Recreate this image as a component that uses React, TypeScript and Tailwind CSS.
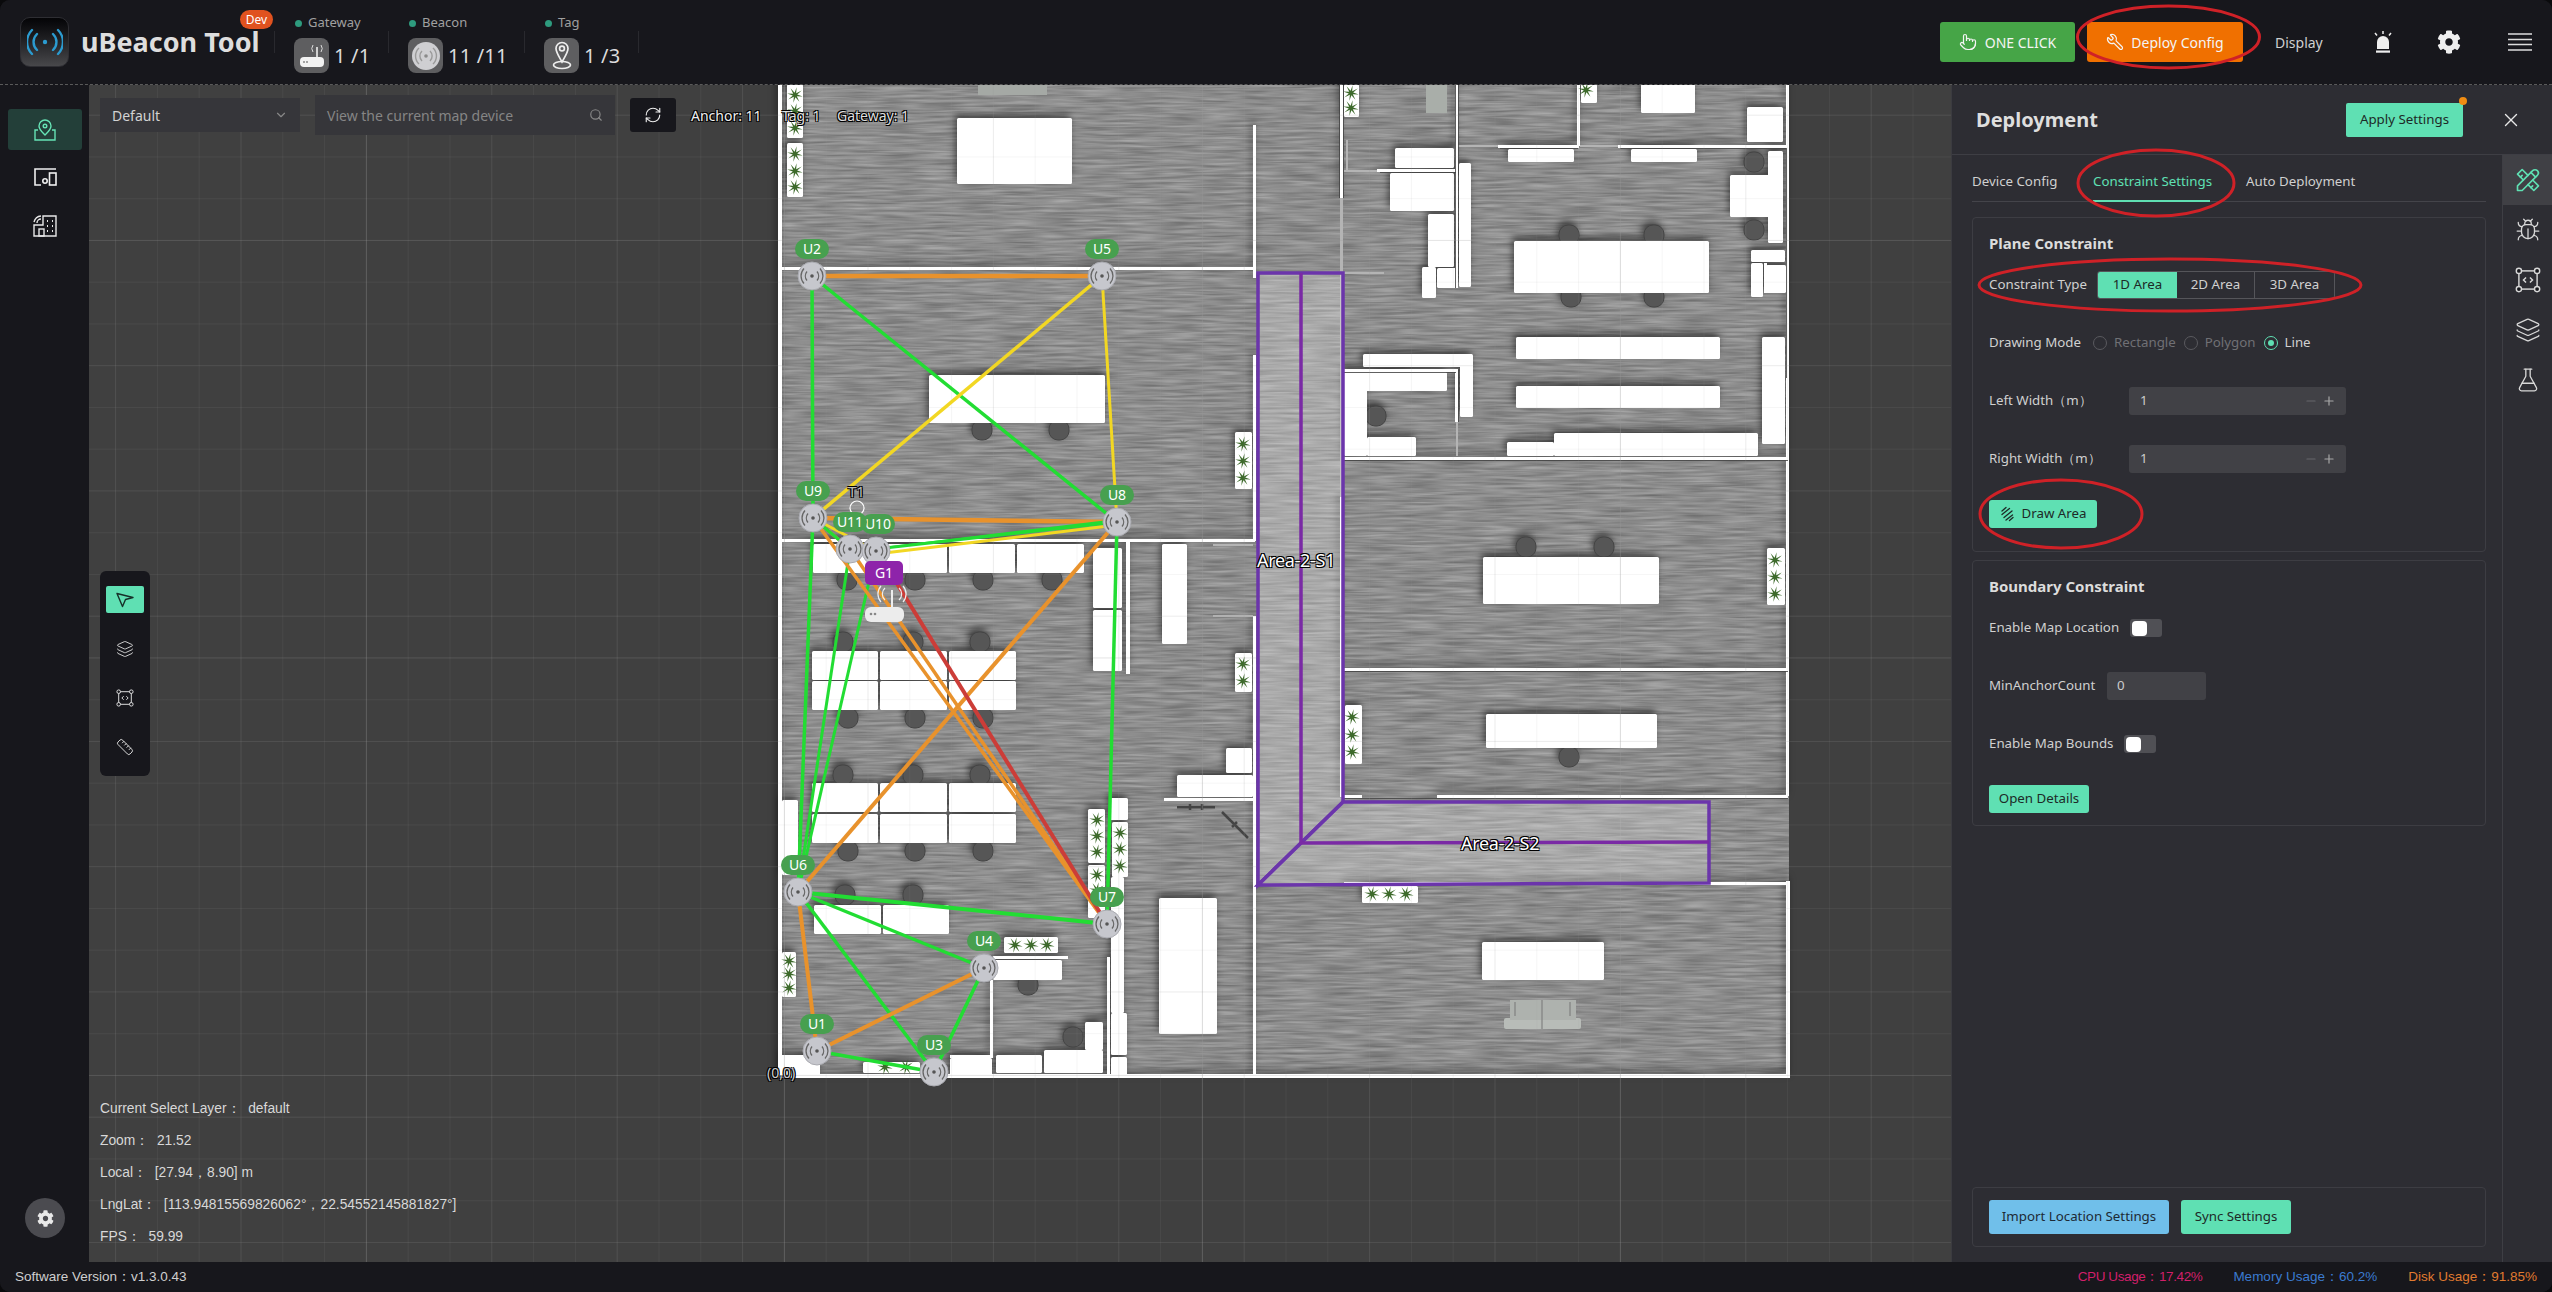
import React from "react";
import { ChevronDown, FlaskConical, Layers, Minus, Plus, Pointer, RefreshCw, Ruler, Search, Bug, Wrench, X } from "lucide-react";
import { FaCog } from "react-icons/fa";
import { TbTools } from "react-icons/tb";

type R = [number, number, number, number];
const tables: R[] = [
  [957,118,1072,184],[787,84,803,138],[787,143,803,197],[929,375,1105,423],[1235,432,1252,489],
  [813,544,880,573],[881,544,947,573],[949,544,1015,573],[1017,544,1084,573],[1093,548,1122,608],[1093,610,1122,671],
  [1162,544,1187,644],[1235,653,1252,692],[812,651,878,680],[880,651,947,680],[949,651,1016,680],[812,681,878,710],[880,681,947,710],[949,681,1016,710],
  [812,783,878,812],[880,783,947,812],[949,783,1016,812],[812,814,878,843],[880,814,947,843],[949,814,1016,843],
  [1226,748,1252,773],[1177,775,1253,797],[1109,798,1128,820],[1112,822,1128,877],[1088,809,1105,863],[1088,865,1105,918],[782,800,798,875],
  [814,905,881,934],[883,905,949,934],[782,952,796,997],[1004,937,1058,953],[993,960,1062,980],[781,1057,820,1075],[863,1062,920,1073],[950,1058,992,1075],
  [996,1055,1042,1073],[1044,1050,1103,1073],[1085,1022,1103,1050],[1111,877,1124,1013],[1111,1013,1127,1055],[1111,1057,1127,1075],[1159,898,1217,1034],
  [1395,148,1454,168],[1390,173,1454,211],[1428,214,1454,267],[1422,267,1436,298],[1437,268,1458,288],[1459,163,1471,287],[1344,84,1359,117],
  [1508,149,1574,162],[1631,149,1697,162],[1581,84,1597,103],[1641,84,1695,113],[1747,107,1783,142],[1768,151,1783,243],[1730,175,1783,217],
  [1514,241,1709,293],[1516,337,1720,359],[1516,386,1720,408],[1554,433,1758,456],[1507,442,1554,456],[1762,337,1785,444],[1751,250,1785,262],[1751,263,1763,297],[1766,265,1786,293],
  [1363,354,1472,367],[1460,354,1473,417],[1344,372,1447,391],[1344,372,1367,456],[1367,437,1416,456],
  [1483,557,1659,604],[1767,548,1785,605],[1486,714,1657,748],[1345,705,1362,764],[1362,886,1418,903],[1482,942,1604,980],
];
const walls: R[] = [
  [778,84,782,1078],[781,267,1253,270],[781,539,1255,542],[1253,125,1256,278],[1253,355,1256,541],[1253,616,1256,1078],[1126,541,1130,674],
  [1164,798,1253,801],[1107,957,1110,1078],[1340,84,1343,198],[1340,497,1343,797],[1455,84,1458,288],[1377,169,1456,172],[1498,145,1579,148],[1577,84,1580,146],[1618,145,1786,148],
  [1344,369,1458,372],[1455,370,1458,422],[1344,457,1788,460],[1786,84,1789,796],[1344,668,1788,671],[1344,795,1362,798],[1437,795,1788,798],[1344,882,1790,885],[1786,881,1790,1078],[778,1074,1790,1078],
  [1764,263,1767,293],[993,956,1068,959],[990,980,993,1058],[781,1055,820,1058],[950,1055,992,1058],
];
const glass: R[] = [[1340,198,1343,497],[1458,145,1498,147],[1580,145,1618,147],[1344,170,1377,172],[1456,422,1458,456],[1344,272,1384,274],[1213,544,1253,546],[1213,615,1253,617],[1346,140,1348,170]];
const chairs: [number,number][] = [[982,430],[1059,430],[847,580],[915,580],[983,580],[1052,580],[843,642],[913,642],[980,642],[848,718],[915,718],[983,718],[843,775],[913,775],[980,775],[848,851],[915,851],[983,851],[845,895],[913,895],[1028,985],[1073,1037],[1754,162],[1754,230],[1569,235],[1654,235],[1571,297],[1654,297],[1376,416],[1526,547],[1604,547],[1569,757]];
const plants: [number,number][] = [[795,95],[795,111],[795,128],[795,154],[795,171],[795,187],[1243,444],[1243,461],[1243,478],[1243,664],[1243,681],[1097,820],[1097,836],[1097,852],[1097,875],[1097,890],[1120,833],[1120,849],[1120,866],[789,961],[789,974],[789,988],[1015,945],[1031,945],[1047,945],[885,1067],[906,1067],[1351,93],[1351,108],[1586,90],[1775,560],[1775,577],[1775,594],[1352,717],[1352,735],[1352,752],[1372,894],[1389,894],[1406,894]];

const A: Record<string,[number,number]> = {U2:[812,276],U5:[1102,276],U9:[813,518],U8:[1117,522],U11:[850,549],U10:[876,551],U6:[798,892],U7:[1107,924],U4:[984,968],U1:[817,1051],U3:[934,1072]};
const OR="#e8922c",GR="#22dd33",YE="#f2d723",RD="#cc3d38";
const links: [string,string,string,number][] = [
  ["U2","U5",OR,4.5],["U9","U8",OR,4.5],["U2","U9",GR,3.5],["U2","U8",GR,3.5],["U5","U9",YE,3.5],["U5","U8",YE,3],
  ["U9","U6",GR,3.5],["U11","U6",GR,3],["U10","U6",GR,3],["U8","U7",GR,3.5],["U8","U6",OR,4],["U9","U7",OR,3.5],["U11","U7",OR,3.5],
  ["U6","U7",GR,4],["U6","U4",GR,3.5],["U6","U3",GR,3.5],["U6","U1",OR,4],["U4","U1",OR,4],["U4","U3",GR,3.5],["U1","U3",GR,3.5],
  ["U9","U11",OR,3],["U9","U10",YE,3],["U9","U11",GR,3],
];
const labels: [string,number,number][] = [["U2",812,249],["U5",1102,249],["U9",813,491],["U8",1117,495],["U10",878,524],["U11",850,522],["U6",798,865],["U7",1107,897],["U4",984,941],["U1",817,1024],["U3",934,1045]];

function range(s:number,e:number,st:number){const o:number[]=[];for(let v=s;v<=e;v+=st)o.push(v);return o;}
const star=(()=>{const p:string[]=[];for(let i=0;i<16;i++){const r=i%2?2.2:8;const a=i*Math.PI/8+0.2;p.push(`${(r*Math.cos(a)).toFixed(1)},${(r*Math.sin(a)).toFixed(1)}`);}return p.join(" ");})();
const lineOp=(i:number,majorOffset:number,major:number)=>(i+majorOffset)%10===0?major:i%3===0?0.19:0.1;

function FloorMap(){
  return (
    <svg className="absolute inset-0 w-full h-full" viewBox="89 85 1862 1177">
      <defs>
        <filter id="weave" x="0" y="0" width="100%" height="100%" colorInterpolationFilters="sRGB">
          <feTurbulence type="fractalNoise" baseFrequency="0.025 0.4" numOctaves={2} seed={4}/>
          <feColorMatrix type="matrix" values="0.3 0 0 0 0.4  0.3 0 0 0 0.4  0.3 0 0 0 0.4  0 0 0 0 1"/>
        </filter>
        <filter id="cast" x="-5%" y="-5%" width="110%" height="110%" colorInterpolationFilters="sRGB">
          <feDropShadow dx={-2} dy={-4} stdDeviation={3.5} floodColor="#000" floodOpacity={0.5}/>
        </filter>
      </defs>
      <rect x={781} y={85} width={1008} height={991} fill="#8a8a8a" filter="url(#weave)"/>
      <g filter="url(#cast)">
        {chairs.map(([x,y],i)=><rect key={i} x={x-10} y={y-10} width={20} height={20} rx={9} fill="#565656" stroke="#444"/>)}
        {walls.map(([a,b,c,d],i)=><rect key={i} x={a} y={b} width={c-a} height={d-b} fill="#fff"/>)}
        {tables.map(([a,b,c,d],i)=><rect key={i} x={a} y={b} width={c-a} height={d-b} rx={1.5} fill="#fff"/>)}
      </g>
      {glass.map(([a,b,c,d],i)=><rect key={i} x={a} y={b} width={c-a} height={d-b} fill="#b4b4b4"/>)}
      {[[1455,84,1,204],[1458,84,1,86],[1344,372,112,1],[1344,460,444,1],[1344,671,444,1],[1344,798,444,1],[1339,84,1,114],[1343,84,1,114],[1380,172,76,1],[1500,148,78,1],[1620,148,166,1],[1458,370,1,52],[1786,148,1,230]].map(([x,y,w,h],i)=><rect key={i} x={x} y={y} width={w} height={h} fill="#444" opacity={0.85}/>)}
      <rect x={1426} y={84} width={21} height={29} fill="#a9aea9"/>
      <rect x={978} y={84} width={69} height={11} fill="#a5a9a5"/>
      <rect x={1504} y={1018} width={77} height={11} rx={2} fill="#b8bcb8"/>
      <rect x={1510} y={1000} width={66} height={20} fill="#aeb2ae"/><path d="M1515 1002v14M1570 1002v14M1542 1000v29" stroke="#777" strokeWidth={1}/>
      <rect x={1177} y={806} width={38} height={2.5} fill="#444"/><path d="M1222 812L1248 838M1190 804v6M1202 804v6M1232 827l5-5" stroke="#444" strokeWidth={2.5}/>
      {plants.map(([x,y],i)=><polygon key={i} transform={`translate(${x} ${y})`} points={star} fill="#3d6a2b"/>)}
      <g fill="none">
        {range(115.2,1262,41.75).map((y,i)=><line key={i} x1={89} x2={1951} y1={y} y2={y} stroke="#999" strokeOpacity={lineOp(i,7,0.26)}/>)}
        {range(115.6,1951,41.8).map((x,i)=><line key={i} x1={x} x2={x} y1={85} y2={1262} stroke="#999" strokeOpacity={lineOp(i,4,0.36)}/>)}
      </g>
      <path d="M1258 273H1343V802L1258 885Z" fill="#fff" fillOpacity={0.25} stroke="#6b35ab" strokeWidth={3.5}/>
      <path d="M1343 802H1709V883L1258 885Z" fill="#fff" fillOpacity={0.25} stroke="#6b35ab" strokeWidth={3.5}/>
      <path d="M1301 273V843L1709 842" fill="none" stroke="#7a2aa5" strokeWidth={3.5}/>
      {links.map(([a,b,c,w],i)=><line key={i} x1={A[a][0]} y1={A[a][1]} x2={A[b][0]} y2={A[b][1]} stroke={c} strokeWidth={w}/>)}
      <line x1={876} y1={549} x2={1117} y2={522} stroke={GR} strokeWidth={3}/>
      <line x1={876} y1={554} x2={1117} y2={525} stroke={YE} strokeWidth={3}/>
      <line x1={850} y1={552} x2={1117} y2={520} stroke={GR} strokeWidth={2}/>
      <line x1={880} y1={556} x2={1107} y2={924} stroke={RD} strokeWidth={4}/>
      <circle cx={857} cy={508} r={7} fill="none" stroke="#fff" strokeWidth={1.2}/>
      {Object.entries(A).map(([k,[x,y]])=>(
        <g key={k} transform={`translate(${x} ${y})`}>
          <circle r={14} fill="#c6c7cd" stroke="#a9aab0"/>
          <circle r={1.8} fill="#555"/>
          <path d="M-5 -4.5A7 7 0 0 0 -5 4.5M5 -4.5A7 7 0 0 1 5 4.5M-8 -7.5A11 11 0 0 0 -8 7.5M8 -7.5A11 11 0 0 1 8 7.5" fill="none" stroke="#666" strokeWidth={1.3}/>
        </g>
      ))}
      <g>
        <path d="M892 590V608" stroke="#eee" strokeWidth={2}/>
        <path d="M885 588A8 8 0 0 0 885 600M899 588A8 8 0 0 1 899 600M881 586A12 12 0 0 0 881 602M903 586A12 12 0 0 1 903 602" fill="none" stroke="#eee" strokeWidth={1.2}/>
        <rect x={865} y={607} width={39} height={15} rx={6} fill="#ececec"/>
        <circle cx={871} cy={614} r={1.3} fill="#888"/><circle cx={875} cy={614} r={1.3} fill="#888"/>
      </g>
    </svg>
  );
}

const outline="[text-shadow:-1px_-1px_0_#000,1px_-1px_0_#000,-1px_1px_0_#000,1px_1px_0_#000]";

function MapOverlays(){
  return <>
    {labels.map(([t,x,y])=><div key={t} style={{left:x-89-17,top:y-85-10}} className="absolute w-[34px] h-[20px] rounded-full bg-[#47a04f] text-white text-[14px] leading-[20px] text-center">{t}</div>)}
    <div className="absolute left-[776px] top-[476px] w-[38px] h-[24px] rounded-[5px] bg-[#8e24aa] text-white text-[14px] leading-[24px] text-center">G1</div>
    <div className={`absolute left-[759px] top-[396px] text-[15px] leading-[20px] text-[#bbb] ${outline}`}>T1</div>
    <div className={`absolute left-[678px] top-[978px] text-[14px] leading-[20px] text-[#ccc] ${outline}`}>(0,0)</div>
    <div className={`absolute left-[1168px] top-[463px] text-[18px] leading-[24px] tracking-[-0.3px] text-white ${outline}`}>Area-2-S1</div>
    <div className={`absolute left-[1372px] top-[746px] text-[18px] leading-[24px] tracking-[-0.3px] text-white ${outline}`}>Area-2-S2</div>
  </>;
}

function Stat({label,value,icon,w}:{label:string;value:string;icon:React.ReactNode;w:string}){
  return (
    <div className={`${w} self-start mt-[14px] pl-[19px]`}>
      <div className="flex items-center gap-[6px] h-[18px] pl-[1px]">
        <span className="w-[7px] h-[7px] rounded-full bg-[#2e9b7e]"/>
        <span className="text-[13px] text-[#a0a0a0]">{label}</span>
      </div>
      <div className="flex items-center mt-[6px] gap-[5px]">
        <div className="w-[35px] h-[35px] rounded-[8px] bg-[#5e5e60] flex items-center justify-center">{icon}</div>
        <span className="text-[20px] text-[#dcdcdc] tracking-[0.2px]">{value}</span>
      </div>
    </div>
  );
}

function Header(){
  return (
    <header className="h-[85px] shrink-0 flex items-center bg-[#17171c] border-b border-dashed border-[#5a5a5a] pl-[20px] pr-[20px]">
      <div className="w-[49px] h-[50px] rounded-[10px] border border-[#2e2e33] bg-gradient-to-b from-[#050507] to-[#48484b] flex items-center justify-center">
        <svg width="36" height="28" viewBox="0 0 36 28" fill="none" stroke="#2b9bd0" strokeWidth="2.4" strokeLinecap="round">
          <circle cx="18" cy="14" r="2.2" fill="#2b9bd0" stroke="none"/>
          <path d="M10 6a11 11 0 0 0 0 16M26 6a11 11 0 0 1 0 16M5 2a17 17 0 0 0 0 24M31 2a17 17 0 0 1 0 24"/>
        </svg>
      </div>
      <div className="relative ml-[12px] w-[193px]">
        <span className="text-[27px] font-bold text-[#dedede] leading-[34px]">uBeacon Tool</span>
        <span className="absolute left-[159px] top-[-15px] w-[33px] h-[19px] rounded-[10px] bg-[#e0521f] text-[12px] leading-[19px] text-center text-white">Dev</span>
      </div>
      <div className="w-px h-[22px] bg-[#29292e]"/>
      <Stat w="w-[113px]" label="Gateway" value="1 /1" icon={
        <svg width="26" height="28" viewBox="0 0 26 28"><rect x="1" y="15" width="24" height="10" rx="4" fill="#f2f2f2"/><path d="M18 15V5" stroke="#eee" strokeWidth="1.6"/><path d="M14 3a6 6 0 0 0 0 7M22 3a6 6 0 0 1 0 7" stroke="#ddd" fill="none"/><circle cx="5" cy="20" r="1" fill="#888"/><circle cx="8" cy="20" r="1" fill="#888"/></svg>}/>
      <div className="w-px h-[22px] bg-[#29292e]"/>
      <Stat w="w-[135px]" label="Beacon" value="11 /11" icon={
        <svg width="30" height="30" viewBox="0 0 30 30" fill="none"><circle cx="15" cy="15" r="14" fill="#cfcfd2"/><circle cx="15" cy="15" r="1.8" fill="#8a8a8a"/><path d="M11 10a7 7 0 0 0 0 10M19 10a7 7 0 0 1 0 10M8 7a11 11 0 0 0 0 16M22 7a11 11 0 0 1 0 16" stroke="#9a9a9a" strokeWidth="1.4"/></svg>}/>
      <div className="w-px h-[22px] bg-[#29292e]"/>
      <Stat w="w-[113px]" label="Tag" value="1 /3" icon={
        <svg width="24" height="32" viewBox="0 0 24 32" fill="none" stroke="#eee" strokeWidth="1.7"><path d="M12 22C8 15 6 12 6 8.500a6 6 0 0 1 12 0C18 12 16 15 12 22Z"/><circle cx="12" cy="8.500" r="2.400"/><ellipse cx="12" cy="25" rx="8.500" ry="3.500"/></svg>}/>
      <div className="w-px h-[22px] bg-[#29292e]"/>
      <div className="ml-auto flex items-center text-white text-[14px]">
        <button className="w-[135px] h-[40px] rounded-[3px] bg-[#46a547] flex items-center justify-center gap-[8px] text-[#f4f4f4]"><Pointer size={18} strokeWidth={1.6}/>ONE CLICK</button>
        <button className="ml-[12px] w-[156px] h-[40px] rounded-[3px] bg-[#f07000] flex items-center justify-center gap-[7px] text-[#f4f4f4]"><Wrench size={18} strokeWidth={1.6} className="-scale-x-100"/>Deploy Config</button>
        <span className="ml-[32px] w-[45px] text-[#d0d0d0] text-[14px]">Display</span>
        <svg className="ml-[52px]" width="22" height="24" viewBox="0 0 22 24" fill="#eee"><path d="M5 19V12a6 6 0 0 1 12 0v7Z"/><rect x="4" y="20.500" width="14" height="2.200"/><path d="M11 1v3M3 3l2 2.500M19 3l-2 2.500" stroke="#eee" strokeWidth="1.500"/></svg>
        <FaCog className="ml-[43px] text-[#eee]" size={24}/>
        <svg className="ml-[47px]" width="24" height="20" viewBox="0 0 24 20" stroke="#ddd" strokeWidth="1.600"><path d="M0 2h24M0 7.500h24M0 12.500h24M0 18h24"/></svg>
      </div>
    </header>
  );
}

function Sidebar(){
  return (
    <aside className="w-[89px] shrink-0 bg-[#17171c] flex flex-col items-center pt-[24px] relative">
      <div className="w-[74px] h-[41px] rounded-[3px] bg-[#233f39] flex items-center justify-center">
        <svg width="24" height="24" viewBox="0 0 24 24" fill="none" stroke="#66e3b5" strokeWidth="1.400"><path d="M5 12H2v10h20V12h-3"/><path d="M12 17C9 14 6 11.500 6 8a6 6 0 0 1 12 0c0 3.500-3 6-6 9Z"/><circle cx="12" cy="8" r="1.800"/></svg>
      </div>
      <div className="mt-[16px] h-[22px] flex items-center">
        <svg width="24" height="18" viewBox="0 0 24 18" fill="none" stroke="#f0f0f0" strokeWidth="1.600"><path d="M23 1H2v16h6"/><circle cx="12" cy="13" r="2.200"/><rect x="16.500" y="5" width="6.500" height="12"/></svg>
      </div>
      <div className="mt-[25px] h-[24px] flex items-center">
        <svg width="24" height="24" viewBox="0 0 24 24" fill="none" stroke="#e8e8e8" strokeWidth="1.400"><path d="M10 3h13v20H1V12h9Z"/><path d="M1 9a8 8 0 0 1 7-6M4 10a4 4 0 0 1 4-4"/><rect x="6" y="16" width="5" height="7"/><path d="M14 8h1M19 8h1M14 13h1M19 13h1M14 18h1M19 18h1" strokeWidth="1.800"/></svg>
      </div>
      <div className="absolute left-[25px] bottom-[24px] w-[40px] h-[40px] rounded-full bg-[#4b4b50] flex items-center justify-center"><FaCog size={17} className="text-[#e8e8e8]"/></div>
    </aside>
  );
}

function Canvas(){
  const tool="w-[38px] h-[27px] rounded-[2px] flex items-center justify-center";
  return (
    <main className="flex-1 relative overflow-hidden bg-[#404040] min-w-0">
      <FloorMap/>
      <MapOverlays/>
      <div className="absolute left-[11px] top-[10px] h-[40px] flex items-center text-[14px]">
        <div className="w-[200px] h-[34px] bg-[#36363a] flex items-center justify-between px-[12px] text-[#d2d2d2]">Default<ChevronDown size={14} className="text-[#888]"/></div>
        <div className="ml-[15px] w-[300px] h-[40px] bg-[#36363a] flex items-center justify-between px-[12px] text-[#858585]">View the current map device<Search size={14} className="text-[#888]"/></div>
        <div className="ml-[15px] w-[46px] h-[34px] rounded-[3px] bg-[#17171c] flex items-center justify-center"><RefreshCw size={18} strokeWidth={1.5} className="text-[#eee]"/></div>
        <span className={`ml-[15px] w-[76px] text-[#eee] whitespace-nowrap ${outline}`}>Anchor: 11</span>
        <span className={`ml-[15px] w-[55px] text-[#ddd] whitespace-nowrap ${outline}`}>Tag: 1</span>
        <span className={`text-[#ddd] whitespace-nowrap ${outline}`}>Gateway: 1</span>
      </div>
      <div className="absolute left-[11px] top-[486px] w-[50px] h-[205px] rounded-[6px] bg-[#17171c] flex flex-col items-center pt-[15px]">
        <div className={`${tool} bg-[#5fe0b3]`}>
          <svg width="18" height="16" viewBox="0 0 18 16" fill="none" stroke="#173029" strokeWidth="1.400" strokeLinejoin="round"><path d="M1 1.500L17 5.500L9.500 7.500L6.500 14.500Z"/></svg>
        </div>
        <div className="mt-[22px] h-[27px] flex items-center"><Layers size={18} strokeWidth={1.2} className="text-[#ddd]"/></div>
        <div className="mt-[22px] h-[27px] flex items-center"><FrameIcon size={18} color="#ddd"/></div>
        <div className="mt-[22px] h-[27px] flex items-center"><Ruler size={18} strokeWidth={1.3} className="text-[#ddd]"/></div>
      </div>
      <div className="absolute left-[11px] top-[1008px] font-['Liberation_Sans',sans-serif] text-[13.8px] leading-[32px] text-[#d8d8d8] whitespace-pre">
        <div>Current Select Layer：  default</div>
        <div>Zoom：  21.52</div>
        <div>Local：  [27.94，8.90] m</div>
        <div>LngLat：  [113.94815569826062°，22.54552145881827°]</div>
        <div>FPS：  59.99</div>
      </div>
    </main>
  );
}

function FrameIcon({size,color}:{size:number;color:string}){
  return (
    <svg width={size} height={size} viewBox="0 0 20 20" fill="none" stroke={color} strokeWidth="1.100">
      <rect x="3" y="3" width="14" height="14"/>
      <circle cx="3" cy="3" r="2" fill="#17171c"/><circle cx="17" cy="3" r="2" fill="#17171c"/><circle cx="3" cy="17" r="2" fill="#17171c"/><circle cx="17" cy="17" r="2" fill="#17171c"/>
      <path d="M8.500 8L6.500 10L8.500 12M11.500 8L13.500 10L11.500 12"/>
    </svg>
  );
}

function Radio({label,on}:{label:string;on?:boolean}){
  return (
    <span className="flex items-center gap-[7px]">
      <span className={`w-[14px] h-[14px] rounded-full border flex items-center justify-center ${on?"border-[#5fe0b3]":"border-[#5a5a5f]"}`}>{on&&<span className="w-[6px] h-[6px] rounded-full bg-[#5fe0b3]"/>}</span>
      <span className={on?"text-[#d0d0d0]":"text-[#707075]"}>{label}</span>
    </span>
  );
}

function NumberRow({label}:{label:string}){
  return (
    <div className="flex items-center h-[28px]">
      <span className="w-[140px] whitespace-pre">{label}</span>
      <div className="w-[217px] h-[28px] rounded-[3px] bg-[#414146] flex items-center pl-[11px] pr-[10px] text-[#ccc]">
        <span className="flex-1">1</span>
        <Minus size={14} className="text-[#66666b] mr-[4px]"/>
        <Plus size={14} className="text-[#a8a8a8]"/>
      </div>
    </div>
  );
}

function Toggle(){
  return <span className="w-[32px] h-[18px] rounded-[3px] bg-[#505055] flex items-center pl-[2px]"><span className="w-[15px] h-[15px] rounded-[4px] bg-white"/></span>;
}

const btn="h-[28px] rounded-[3px] bg-[#5fe0b3] text-[#1d2a27] flex items-center justify-center";

function Panel(){
  const card="border border-[#3d3d43] rounded-[4px] px-[16px]";
  return (
    <section className="w-[601px] shrink-0 bg-[#2d2d33] border-l border-[#3b3b40] flex flex-col text-[13.3px] text-[#d0d0d0]">
      <div className="h-[70px] shrink-0 border-b border-[#3e3e44] flex items-center pl-[24px] pr-[30px]">
        <h2 className="text-[20px] font-bold text-[#dedede]">Deployment</h2>
        <div className="ml-auto relative">
          <button className="w-[117px] h-[34px] rounded-[2px] bg-[#5fe0b3] text-[#1d2a27]">Apply Settings</button>
          <span className="absolute right-[-4px] top-[-6px] w-[8px] h-[8px] rounded-full bg-[#f08c12]"/>
        </div>
        <X className="ml-[37px] text-[#e8e8e8]" size={22} strokeWidth={1.5}/>
      </div>
      <div className="flex-1 flex min-h-0">
        <div className="w-[550px] pl-[20px] pr-[16px] flex flex-col">
          <div className="h-[47px] shrink-0 border-b border-[#44444a] flex items-start pt-[15px] relative">
            <span className="w-[121px] leading-[22px]">Device Config</span>
            <span className="w-[153px] leading-[22px] text-[#5fe0b3] relative h-[32px]">Constraint Settings<span className="absolute left-0 bottom-0 w-[117px] h-[2px] bg-[#5fe0b3]"/></span>
            <span className="leading-[22px]">Auto Deployment</span>
          </div>
          <div className={`${card} mt-[15px] pt-[11px] pb-[23px]`}>
            <div className="h-[28px] flex items-center text-[15px] font-bold text-[#dcdcdc]">Plane Constraint</div>
            <div className="mt-[14px] h-[28px] flex items-center">
              <span className="w-[108px]">Constraint Type</span>
              <div className="h-[28px] flex border border-[#55555a] rounded-[3px] overflow-hidden">
                <span className="w-[79px] bg-[#5fe0b3] text-[#1d2a27] flex items-center justify-center">1D Area</span>
                <span className="w-[78px] flex items-center justify-center border-r border-[#55555a]">2D Area</span>
                <span className="w-[79px] flex items-center justify-center">3D Area</span>
              </div>
            </div>
            <div className="mt-[30px] h-[28px] flex items-center">
              <span className="w-[104px]">Drawing Mode</span>
              <span className="flex items-center gap-[8px]"><Radio label="Rectangle"/><Radio label="Polygon"/><Radio label="Line" on/></span>
            </div>
            <div className="mt-[30px]"><NumberRow label="Left Width（m）"/></div>
            <div className="mt-[30px]"><NumberRow label="Right Width（m）"/></div>
            <button className={`${btn} mt-[27px] w-[108px] gap-[8px]`}>
              <svg width="14" height="16" viewBox="0 0 14 16" fill="none" stroke="#1d2a27" strokeWidth="1.300" strokeLinecap="round"><path d="M2 5L6 1.500M2 8.500L9.500 2.500M4 11.500L12 5M6 14L12.500 9M9.500 14.500L13 11.500"/></svg>
              Draw Area
            </button>
          </div>
          <div className={`${card} mt-[8px] pt-[11px] pb-[12px]`}>
            <div className="h-[28px] flex items-center text-[15px] font-bold text-[#dcdcdc]">Boundary Constraint</div>
            <div className="mt-[14px] h-[28px] flex items-center"><span className="w-[141px]">Enable Map Location</span><Toggle/></div>
            <div className="mt-[30px] h-[28px] flex items-center"><span className="w-[118px]">MinAnchorCount</span><span className="w-[99px] h-[28px] rounded-[3px] bg-[#414146] flex items-center pl-[10px] text-[#ccc]">0</span></div>
            <div className="mt-[30px] h-[28px] flex items-center"><span className="w-[135px]">Enable Map Bounds</span><Toggle/></div>
            <button className={`${btn} mt-[27px] w-[100px]`}>Open Details</button>
          </div>
          <div className={`${card} mt-auto mb-[15px] h-[60px] flex items-center gap-[12px]`}>
            <button className="w-[180px] h-[34px] rounded-[3px] bg-[#70bfea] text-[#1d2a35]">Import Location Settings</button>
            <button className="w-[110px] h-[34px] rounded-[3px] bg-[#5fe0b3] text-[#1d2a27]">Sync Settings</button>
          </div>
        </div>
        <div className="w-[50px] shrink-0 border-l border-[#3e3e44] flex flex-col">
          <div className="h-[50px] bg-[#404045] flex items-center justify-center"><TbTools size={28} className="text-[#5fe0b3]" strokeWidth={1.4}/></div>
          <div className="h-[50px] flex items-center justify-center"><Bug size={26} strokeWidth={1.200} className="text-[#d8d8d8]"/></div>
          <div className="h-[50px] flex items-center justify-center"><FrameIcon size={26} color="#d8d8d8"/></div>
          <div className="h-[50px] flex items-center justify-center"><Layers size={26} strokeWidth={1.200} className="text-[#d8d8d8]"/></div>
          <div className="h-[50px] flex items-center justify-center"><FlaskConical size={26} strokeWidth={1.200} className="text-[#d8d8d8]"/></div>
        </div>
      </div>
    </section>
  );
}

export default function App(){
  return (
    <div className="relative w-[2552px] h-[1292px] bg-[#0a0a0c] overflow-hidden font-['Noto_Sans',sans-serif]">
      <div className="h-full flex flex-col rounded-[10px] overflow-hidden bg-[#17171c]">
        <Header/>
        <div className="flex-1 flex min-h-0">
          <Sidebar/>
          <Canvas/>
          <Panel/>
        </div>
        <footer className="h-[30px] shrink-0 bg-[#17171c] flex items-center pl-[15px] pr-[15px] text-[13.5px] font-['Liberation_Sans',sans-serif]">
          <span className="text-[#cfcfcf]">Software Version：v1.3.0.43</span>
          <span className="ml-auto text-[#d11f6a] tracking-[-0.4px]">CPU Usage：17.42%</span>
          <span className="ml-[31px] text-[#3b7bd0]">Memory Usage：60.2%</span>
          <span className="ml-[31px] text-[#e07b30]">Disk Usage：91.85%</span>
        </footer>
      </div>
      <svg className="absolute inset-0 w-full h-full pointer-events-none" viewBox="0 0 2552 1292" fill="none" stroke="#cf2127" strokeWidth="3">
        <ellipse cx="2168.500" cy="37" rx="91" ry="31"/>
        <ellipse cx="2156" cy="183" rx="78" ry="33"/>
        <ellipse cx="2170" cy="285" rx="191" ry="26"/>
        <ellipse cx="2061" cy="514" rx="81" ry="34"/>
      </svg>
    </div>
  );
}
